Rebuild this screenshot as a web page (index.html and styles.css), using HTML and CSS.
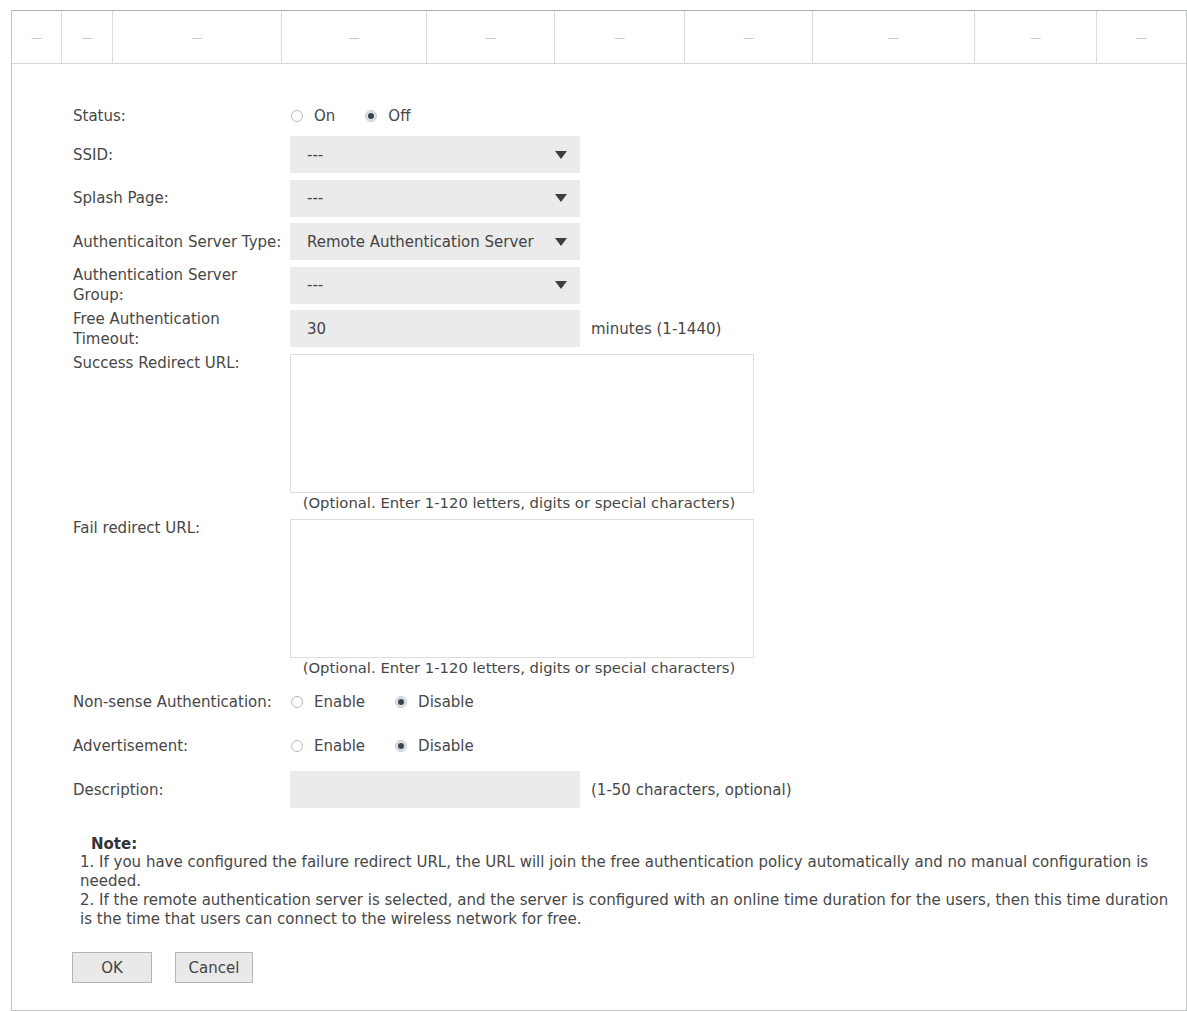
FILE: index.html
```html
<!DOCTYPE html>
<html lang="en">
<head>
    <meta charset="UTF-8">
    <meta name="viewport" content="width=device-width, initial-scale=1.0">
    <title>Portal Configuration</title>
    <link rel="stylesheet" href="styles.css">
</head>
<body>
    <div class="panel">
        <div class="grid-head">
            <div class="cell"><span class="dash">&mdash;</span></div>
            <div class="cell"><span class="dash">&mdash;</span></div>
            <div class="cell"><span class="dash">&mdash;</span></div>
            <div class="cell"><span class="dash">&mdash;</span></div>
            <div class="cell"><span class="dash">&mdash;</span></div>
            <div class="cell"><span class="dash">&mdash;</span></div>
            <div class="cell"><span class="dash">&mdash;</span></div>
            <div class="cell"><span class="dash">&mdash;</span></div>
            <div class="cell"><span class="dash">&mdash;</span></div>
            <div class="cell"><span class="dash">&mdash;</span></div>
        </div>

        <form class="portal-form">
            <div class="row row-radio row-status">
                <label class="row-label">Status:</label>
                <div class="radios">
                    <span class="radio"></span><span class="radio-text">On</span>
                    <span class="radio checked"></span><span class="radio-text">Off</span>
                </div>
            </div>

            <div class="row">
                <label class="row-label">SSID:</label>
                <div class="select"><span>---</span><i class="caret"></i></div>
            </div>

            <div class="row">
                <label class="row-label">Splash Page:</label>
                <div class="select"><span>---</span><i class="caret"></i></div>
            </div>

            <div class="row">
                <label class="row-label">Authenticaiton Server Type:</label>
                <div class="select"><span>Remote Authentication Server</span><i class="caret"></i></div>
            </div>

            <div class="row">
                <label class="row-label">Authentication Server Group:</label>
                <div class="select"><span>---</span><i class="caret"></i></div>
            </div>

            <div class="row">
                <label class="row-label">Free Authentication Timeout:</label>
                <div class="text-box"><span>30</span></div>
                <span class="unit">minutes (1-1440)</span>
            </div>

            <div class="row row-area">
                <label class="row-label">Success Redirect URL:</label>
                <div class="area-wrap">
                    <textarea class="url-area"></textarea>
                    <p class="hint">(Optional. Enter 1-120 letters, digits or special characters)</p>
                </div>
            </div>

            <div class="row row-area row-area-last">
                <label class="row-label">Fail redirect URL:</label>
                <div class="area-wrap">
                    <textarea class="url-area"></textarea>
                    <p class="hint">(Optional. Enter 1-120 letters, digits or special characters)</p>
                </div>
            </div>

            <div class="row row-radio">
                <label class="row-label">Non-sense Authentication:</label>
                <div class="radios">
                    <span class="radio"></span><span class="radio-text">Enable</span>
                    <span class="radio checked"></span><span class="radio-text">Disable</span>
                </div>
            </div>

            <div class="row row-radio">
                <label class="row-label">Advertisement:</label>
                <div class="radios">
                    <span class="radio"></span><span class="radio-text">Enable</span>
                    <span class="radio checked"></span><span class="radio-text">Disable</span>
                </div>
            </div>

            <div class="row">
                <label class="row-label">Description:</label>
                <div class="text-box"></div>
                <span class="unit">(1-50 characters, optional)</span>
            </div>
        </form>

        <div class="note">
            <p class="note-title">Note:</p>
            <p>1. If you have configured the failure redirect URL, the URL will join the free authentication policy automatically and no manual configuration is needed.</p>
            <p>2. If the remote authentication server is selected, and the server is configured with an online time duration for the users, then this time duration is the time that users can connect to the wireless network for free.</p>
        </div>

        <div class="actions">
            <button type="button" class="btn btn-ok">OK</button>
            <button type="button" class="btn btn-cancel">Cancel</button>
        </div>
    </div>
</body>
</html>
```

FILE: styles.css
```css
body {
    margin: 0;
    background: #fff;
    font-family: "DejaVu Sans", Verdana, sans-serif;
    font-size: 15px;
    color: #474747;
}

.panel {
    margin: 10px 0 0 11px;
    width: 1176px;
    box-sizing: border-box;
    border: 1px solid #c3c6c6;
    border-top-color: #a9adad;
    padding-bottom: 27px;
}

/* table header strip */
.grid-head {
    display: grid;
    grid-template-columns: 50px 51px 169px 145px 128px 130px 128px 162px 122px 1fr;
    height: 52px;
    border-bottom: 1px solid #d8d8d8;
}

.grid-head .cell {
    border-right: 1px solid #dcdcdc;
    display: flex;
    align-items: center;
    justify-content: center;
}

.grid-head .cell:last-child {
    border-right: none;
}

.dash {
    color: #bdbdbd;
    font-size: 11px;
}

/* form */
.portal-form {
    padding: 37px 0 0 61px;
}

.row {
    display: flex;
    align-items: center;
    height: 37px;
    margin-bottom: 6.5px;
}

.row-radio {
    margin-bottom: 7px;
}

.row.row-status {
    height: 30px;
    margin-bottom: 5px;
}

.row-label {
    width: 217px;
    flex-shrink: 0;
    padding-right: 6px;
    box-sizing: border-box;
    line-height: 20px;
}

.select,
.text-box {
    width: 290px;
    height: 37px;
    background: #ebebeb;
    box-sizing: border-box;
    padding: 0 13px 0 17px;
    display: flex;
    align-items: center;
    justify-content: space-between;
    color: #444;
}

.caret {
    width: 0;
    height: 0;
    border-left: 6px solid transparent;
    border-right: 6px solid transparent;
    border-top: 8px solid #3a3f44;
}

.unit {
    margin-left: 11px;
}

.radios {
    display: flex;
    align-items: center;
    padding-left: 1px;
}

.radio {
    width: 12px;
    height: 12px;
    border: 1px solid #b9b9b9;
    border-radius: 50%;
    box-sizing: border-box;
    background: #fff;
    margin-right: 11px;
    display: flex;
    align-items: center;
    justify-content: center;
}

.radio.checked {
    background: #dbe3ea;
    border-color: #c3ccd3;
}

.radio.checked::after {
    content: "";
    width: 6px;
    height: 6px;
    border-radius: 50%;
    background: #3b4249;
}

.radio-text {
    margin-right: 30px;
}

.row-area {
    height: auto;
    align-items: flex-start;
    margin-bottom: 7px;
}

.row-area .row-label {
    line-height: 18px;
}

.row-area-last {
    margin-bottom: 6.5px;
}

.area-wrap {
    width: 464px;
}

.url-area {
    display: block;
    width: 464px;
    height: 139px;
    margin: 0;
    border: 1px solid #dedede;
    box-sizing: border-box;
    resize: none;
    background: #fff;
}

.hint {
    margin: 1px 0 0;
    padding-right: 6px;
    line-height: 18px;
    text-align: center;
    font-size: 14.8px;
    white-space: nowrap;
}

/* note */
.note {
    margin: 28px 6px 0 68px;
    font-size: 15px;
}

.note p {
    margin: 0;
    line-height: 19px;
}

.note .note-title {
    font-weight: bold;
    font-size: 15px;
    line-height: 17px;
    padding-left: 11px;
    color: #333;
}

.actions {
    display: flex;
    gap: 23px;
    margin: 23px 0 0 60px;
}

.btn {
    height: 31px;
    background: #e9e9e9;
    border: 1px solid #b5b5b5;
    font-family: "DejaVu Sans", Verdana, sans-serif;
    font-size: 15px;
    color: #444;
    padding: 0;
    cursor: pointer;
}

.btn-ok {
    width: 80px;
}

.btn-cancel {
    width: 78px;
}
```
